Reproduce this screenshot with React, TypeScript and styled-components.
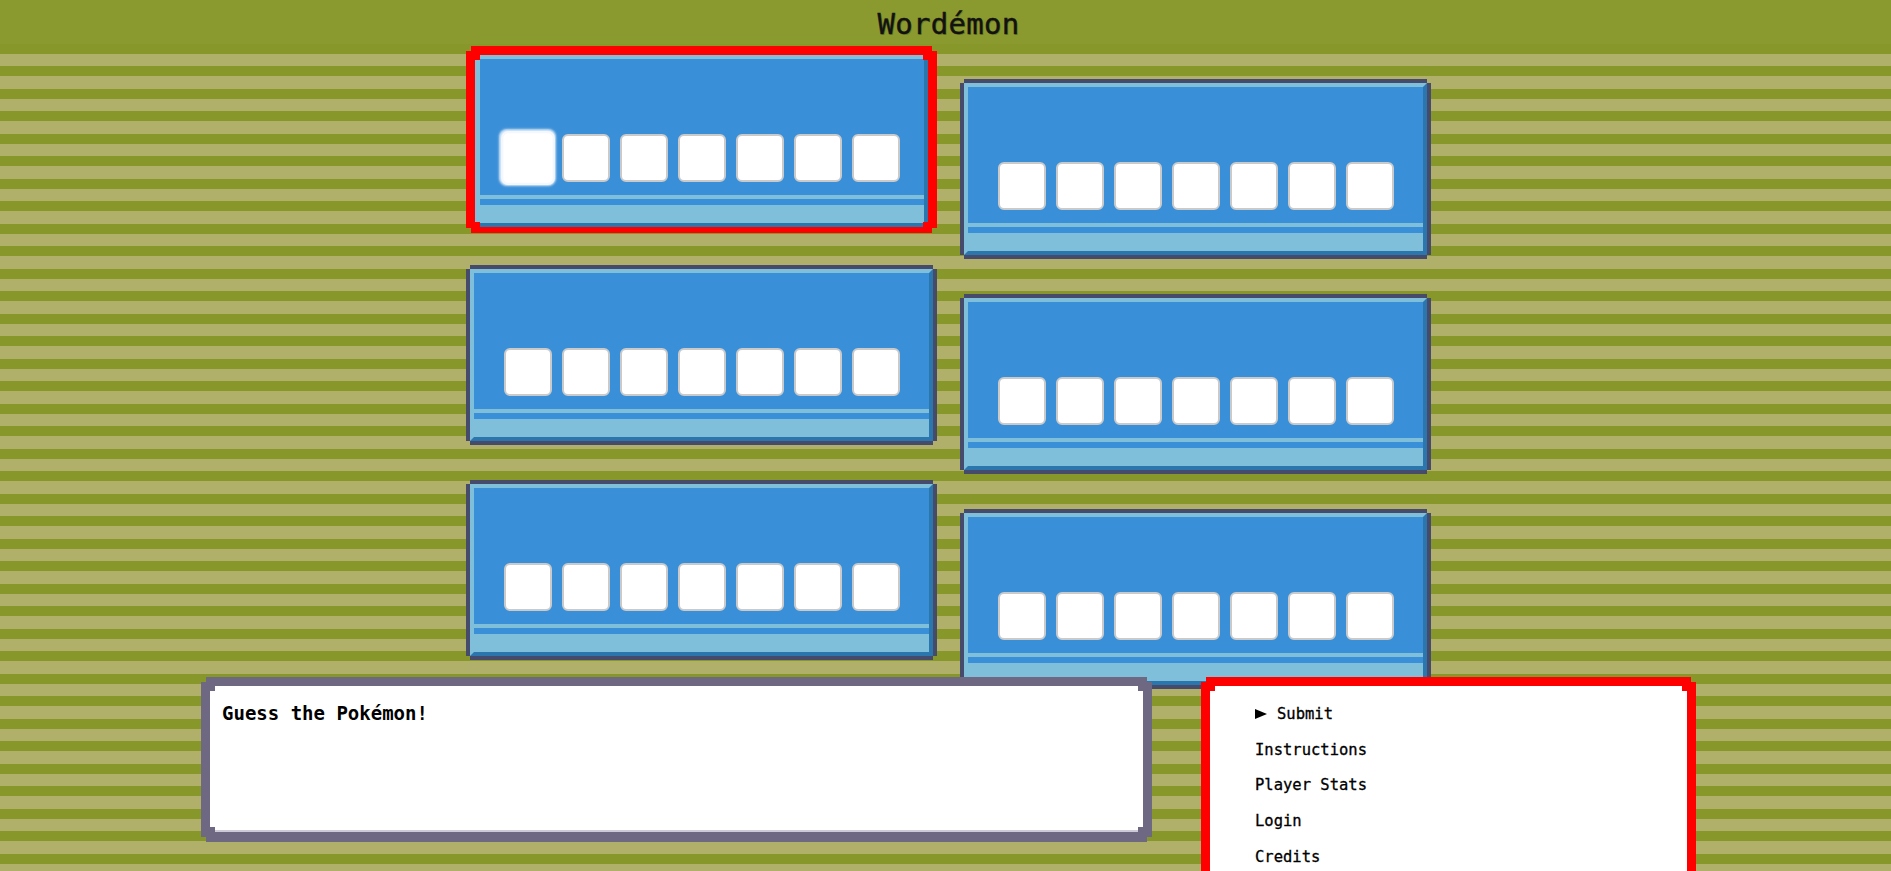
import React from "react";
import styled, { createGlobalStyle, css } from "styled-components";

const GlobalStyle = createGlobalStyle`
  html, body {
    margin: 0;
    padding: 0;
    height: 100%;
    overflow: hidden;
  }
  body {
    font-family: "DejaVu Sans Mono", "Liberation Mono", monospace;
    background: #879729;
  }
  * { box-sizing: border-box; }
`;

const notch = (n: number) => css`
  clip-path: polygon(
    ${n}px 0, calc(100% - ${n}px) 0, calc(100% - ${n}px) ${n}px, 100% ${n}px,
    100% calc(100% - ${n}px), calc(100% - ${n}px) calc(100% - ${n}px),
    calc(100% - ${n}px) 100%, ${n}px 100%, ${n}px calc(100% - ${n}px),
    0 calc(100% - ${n}px), 0 ${n}px, ${n}px ${n}px
  );
`;

const Page = styled.div`
  display: flex;
  flex-direction: column;
  height: 100vh;
  overflow: hidden;
`;

const Header = styled.header`
  height: 44px;
  flex: none;
  background: #8a9a2e;
  display: flex;
  align-items: center;
  justify-content: center;
  padding: 4px 0 0 6px;
`;

const Title = styled.h1`
  margin: 0;
  font-family: "DejaVu Sans Mono", monospace;
  font-weight: normal;
  font-size: 29px;
  line-height: 1;
  color: #121212;
  text-shadow: 1px 1px 0 rgba(60, 70, 20, 0.35);
  letter-spacing: 0.3px;
  -webkit-text-stroke: 0.4px #121212;
`;

const Main = styled.main`
  flex: 1;
  display: flex;
  flex-direction: column;
  align-items: center;
  padding: 6px 0 0 6px;
  background: repeating-linear-gradient(
    180deg,
    #879729 0px,
    #879729 10px,
    #b1b06b 10px,
    #b1b06b 22.5px
  );
`;

const Board = styled.section`
  display: flex;
  gap: 23px;
  align-items: flex-start;
`;

const Column = styled.div<{ $shift: number }>`
  display: flex;
  flex-direction: column;
  gap: 35px;
  transform: translateY(${(p) => p.$shift}px);
`;

const PanelFrame = styled.div<{ $selected?: boolean }>`
  width: 471px;
  background: ${(p) => (p.$selected ? "#ff0000" : "#474b6b")};
  padding: ${(p) => (p.$selected ? "9px 9px 6px 9px" : "4px")};
  margin: ${(p) => (p.$selected ? "-4px 0 -3px 0" : "0")};
  ${(p) => notch(p.$selected ? 5 : 4)}
`;

const PanelBody = styled.div<{ $selected?: boolean }>`
  background: #398fd8;
  border-top: 4px solid #80bfd9;
  border-left: ${(p) => (p.$selected ? 5 : 4)}px solid #80bfd9;
  border-right: 4px solid #2a76ad;
  border-bottom: 4px solid #2a76ad;
  ${(p) => (p.$selected ? notch(5) : "")}
`;

const TileRow = styled.div`
  display: flex;
  justify-content: center;
  gap: 10px;
  padding: 75px 0 13px;
`;

const Tile = styled.div<{ $active?: boolean }>`
  width: 48px;
  height: 48px;
  background: #ffffff;
  border: 2px solid #cacaca;
  border-radius: 6px;
  ${(p) =>
    p.$active &&
    css`
      transform: scale(1.12);
      border-color: #f4f7fb;
      box-shadow: 0 0 2px 1px rgba(255, 255, 255, 0.8);
    `}
`;

const Stripe = styled.div`
  height: 4px;
  background: #80bfd9;
  margin-bottom: 6px;
`;

const Ledge = styled.div`
  height: 18px;
  background: #80bfd9;
`;

const BottomRow = styled.section`
  position: relative;
  z-index: 1;
  display: flex;
  gap: 49px;
  margin-top: 17px;
`;

const MessageFrame = styled.div`
  width: 951px;
  height: 165px;
  padding: 9px 9px 10px 9px;
  background: #6e6882;
  ${notch(5)}
`;

const MessageBody = styled.div`
  height: 100%;
  background: #ffffff;
  border-bottom: 2px solid #cdc9d6;
  padding: 16px 12px;
  ${notch(5)}
`;

const MessageText = styled.p`
  margin: 0;
  font-family: "DejaVu Sans Mono", monospace;
  font-weight: bold;
  font-size: 19px;
  line-height: 1.2;
  color: #000;
`;

const MenuFrame = styled.div`
  width: 495px;
  height: 240px;
  padding: 9px;
  background: #ff0000;
  ${notch(5)}
`;

const MenuBody = styled.ul`
  height: 100%;
  margin: 0;
  list-style: none;
  background: #ffffff;
  padding: 10px 0 0 45px;
  ${notch(5)}
`;

const MenuItem = styled.li`
  height: 35.7px;
  display: flex;
  align-items: center;
  gap: 10px;
  font-family: "DejaVu Sans Mono", monospace;
  font-size: 15.5px;
  color: #000;
  -webkit-text-stroke: 0.3px #000;
`;

const Arrow = () => (
  <svg width="12" height="10" viewBox="0 0 12 10" aria-hidden="true">
    <polygon points="0,0 12,5 0,10" fill="#000" />
  </svg>
);

type PanelProps = { selected?: boolean };

const Panel = ({ selected }: PanelProps) => (
  <PanelFrame $selected={selected}>
    <PanelBody $selected={selected}>
      <TileRow>
        {Array.from({ length: 7 }).map((_, i) => (
          <Tile key={i} $active={selected && i === 0} />
        ))}
      </TileRow>
      <Stripe />
      <Ledge />
    </PanelBody>
  </PanelFrame>
);

const menu = ["Submit", "Instructions", "Player Stats", "Login", "Credits"];

export default function App() {
  return (
    <Page>
      <GlobalStyle />
      <Header>
        <Title>Wordémon</Title>
      </Header>
      <Main>
        <Board>
          <Column $shift={0}>
            <Panel selected />
            <Panel />
            <Panel />
          </Column>
          <Column $shift={29}>
            <Panel />
            <Panel />
            <Panel />
          </Column>
        </Board>
        <BottomRow>
          <MessageFrame>
            <MessageBody>
              <MessageText>Guess the Pokémon!</MessageText>
            </MessageBody>
          </MessageFrame>
          <MenuFrame>
            <MenuBody>
              {menu.map((m, i) => (
                <MenuItem key={m}>
                  {i === 0 && <Arrow />}
                  {m}
                </MenuItem>
              ))}
            </MenuBody>
          </MenuFrame>
        </BottomRow>
      </Main>
    </Page>
  );
}
